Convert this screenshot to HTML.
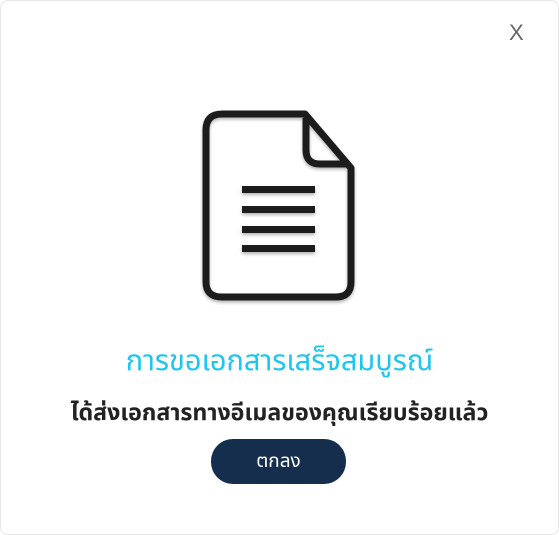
<!DOCTYPE html>
<html><head><meta charset="utf-8"><style>
html,body{margin:0;padding:0;background:#fff;}
body{width:559px;height:535px;position:relative;overflow:hidden;font-family:"Liberation Sans","Noto Sans Thai","DejaVu Sans",sans-serif;}
.card{position:absolute;left:0;top:0;width:557px;height:533px;border:1px solid #e6e6e6;border-radius:8px;}
.x{position:absolute;left:509px;top:20px;font-size:22px;color:#666;font-weight:300;}
.t1{position:absolute;left:0;width:559px;top:340px;text-align:center;font-size:29px;color:#1cc6f0;white-space:nowrap;}
.t2{position:absolute;left:0;width:559px;top:396px;text-align:center;font-size:23.2px;font-weight:bold;color:#222;white-space:nowrap;}
.btn{position:absolute;left:211px;top:439px;width:135px;height:45px;border-radius:22px;background:#152e4d;color:#fff;font-size:19px;text-align:center;line-height:45px;}
</style></head><body>
<div class="card"></div>
<div class="x">X</div>
<svg style="position:absolute;left:0;top:0" width="559" height="535">
<defs><filter id="s"><feDropShadow dx="0" dy="2" stdDeviation="1.5" flood-opacity="0.3"/></filter></defs>
<g filter="url(#s)" fill="none" stroke="#1e1e1e" stroke-width="7" stroke-linejoin="round">
<path d="M222 114 H305 L351 168 V282 Q351 297 336 297 H222 Q206 297 206 282 V130 Q206 114 222 114 Z"/>
<path d="M306 118 V150 Q306 164 320 164 H348"/>
</g>
<g fill="#1e1e1e" filter="url(#s)">
<rect x="242" y="186" width="73" height="7"/>
<rect x="242" y="206" width="73" height="7"/>
<rect x="242" y="226" width="73" height="7"/>
<rect x="242" y="245" width="73" height="7"/>
</g>
</svg>
<div class="t1">การขอเอกสารเสร็จสมบูรณ์</div>
<div class="t2">ได้ส่งเอกสารทางอีเมลของคุณเรียบร้อยแล้ว</div>
<div class="btn">ตกลง</div>
</body></html>
